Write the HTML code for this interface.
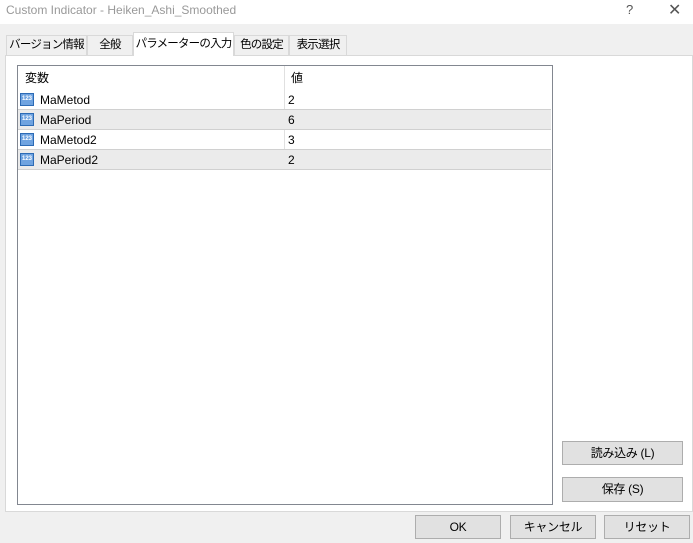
<!DOCTYPE html>
<html><head><meta charset="utf-8"><style>
body{margin:0;width:693px;height:543px;background:#f0f0f0;position:relative;overflow:hidden;font-family:"Liberation Sans","Noto Sans CJK JP",sans-serif;font-size:12px;color:#000}
.a{position:absolute;white-space:nowrap}
.title{left:0;top:0;width:693px;height:24px;background:#fff}
.tab{top:35px;height:20px;background:#f0f0f0;border:1px solid #d9d9d9;border-bottom:none;line-height:19px;text-align:center;font-size:11.5px;box-sizing:border-box;letter-spacing:-0.8px;overflow:hidden}
.btn{background:#e1e1e1;border:1px solid #adadad;box-sizing:border-box;text-align:center;font-size:12px;letter-spacing:-0.3px}
.row{left:1px;width:533px;height:20px;line-height:20px;border-bottom:1px solid #d0d0d0;box-sizing:border-box}
.ic{position:absolute;left:2px;top:3px;width:14px;height:13px;background:#6fa3e0;border:1px solid #2d6bb5;box-sizing:border-box;color:#fff;font-size:6px;line-height:11px;text-align:center;font-weight:bold}
.n{position:absolute;left:22px}.v{position:absolute;left:270px}
</style></head><body>
<div class="a title"></div>
<div class="a" style="left:6px;top:3px;color:#999;font-size:12px">Custom Indicator - Heiken_Ashi_Smoothed</div>
<div class="a" style="left:626px;top:2px;color:#555;font-size:13px">?</div>
<div class="a" style="left:668px;top:0px;color:#555;font-size:16px">✕</div>
<div class="a" style="left:5px;top:55px;width:688px;height:457px;background:#fff;border:1px solid #d9d9d9;box-sizing:border-box"></div>
<div class="a tab" style="left:6px;width:81px">バージョン情報</div>
<div class="a tab" style="left:87px;width:46px">全般</div>
<div class="a tab" style="left:133px;top:32px;height:24px;width:101px;background:#fff;line-height:22px">パラメーターの入力</div>
<div class="a tab" style="left:234px;width:55px">色の設定</div>
<div class="a tab" style="left:289px;width:58px">表示選択</div>
<div class="a" style="left:17px;top:65px;width:536px;height:440px;border:1px solid #828790;box-sizing:border-box;background:#fff">
<div class="a" style="left:0;top:0;width:534px;height:24px;line-height:24px"><span class="n" style="left:7px">変数</span><span class="v" style="left:273px">値</span></div>
<div class="a" style="left:266px;top:0;width:1px;height:104px;background:#e0e0e0"></div>
<div class="a row" style="top:24px;left:0"><div class="ic">123</div><span class="n">MaMetod</span><span class="v">2</span></div>
<div class="a row" style="top:44px;left:0;background:#ebebeb"><div class="ic">123</div><span class="n">MaPeriod</span><span class="v">6</span></div>
<div class="a row" style="top:64px;left:0"><div class="ic">123</div><span class="n">MaMetod2</span><span class="v">3</span></div>
<div class="a row" style="top:84px;left:0;background:#ebebeb"><div class="ic">123</div><span class="n">MaPeriod2</span><span class="v">2</span></div>
</div>
<div class="a btn" style="left:562px;top:441px;width:121px;height:24px;line-height:22px">読み込み (L)</div>
<div class="a btn" style="left:562px;top:477px;width:121px;height:25px;line-height:23px">保存 (S)</div>
<div class="a btn" style="left:415px;top:515px;width:86px;height:24px;line-height:22px">OK</div>
<div class="a btn" style="left:510px;top:515px;width:86px;height:24px;line-height:22px">キャンセル</div>
<div class="a btn" style="left:604px;top:515px;width:86px;height:24px;line-height:22px">リセット</div>
</body></html>
